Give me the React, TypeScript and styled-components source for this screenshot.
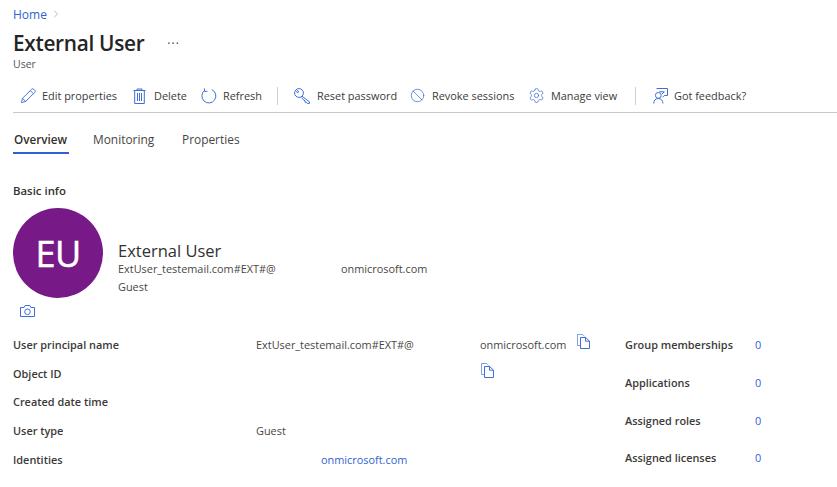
import React from 'react'

import { Ban, ChevronRight, Settings } from 'lucide-react'
import styled, { createGlobalStyle } from 'styled-components'

const blue = '#2f62cf'
const iconBlue = '#3f6fd8'
const text = '#323130'

const GlobalStyle = createGlobalStyle`
  html, body {
    margin: 0;
    padding: 0;
    background: #ffffff;
  }
  body {
    font-family: "Open Sans", "Noto Sans", sans-serif;
    color: ${text};
    overflow: hidden;
  }
`

const Page = styled.div`
  width: 837px;
  height: 487px;
  padding: 6px 0 0 13px;
  box-sizing: border-box;
  overflow: hidden;
`

const Breadcrumb = styled.nav`
  display: flex;
  align-items: center;
  gap: 3px;
  height: 16px;
  font-size: 12px;
  color: ${blue};
`

const TitleRow = styled.div`
  display: flex;
  align-items: center;
  height: 30px;
  margin-top: 6px;
`

const Title = styled.h1`
  margin: 0;
  font-size: 20.8px;
  line-height: 30px;
  font-weight: 600;
  color: #242424;
  letter-spacing: -0.3px;
`

const More = styled.span`
  margin: 2px 0 0 23px;
  font-size: 12px;
  line-height: 12px;
  letter-spacing: 1px;
  color: #444;
`

const Subtitle = styled.div`
  font-size: 10.5px;
  line-height: 14px;
  margin-top: -1px;
  color: #555;
`

const Toolbar = styled.div`
  display: flex;
  align-items: center;
  height: 33px;
  margin-top: 8px;
  padding-left: 7px;
  border-bottom: 1px solid #c8c8c8;
`

const ToolButton = styled.div<{ $gap?: number; $width: number }>`
  display: flex;
  align-items: center;
  width: ${(p) => p.$width}px;
  flex: none;
  font-size: 10.9px;
  color: #3b3a39;
  white-space: nowrap;

  svg {
    flex: none;
    margin-right: ${(p) => p.$gap ?? 7}px;
  }
`

const Divider = styled.span<{ $after: number }>`
  width: 1px;
  height: 18px;
  flex: none;
  background: #d0d0d0;
  margin-right: ${(p) => p.$after}px;
`

const Tabs = styled.div`
  display: flex;
  height: 41px;
`

const Tab = styled.div<{ $active?: boolean; $width: number }>`
  width: ${(p) => p.$width}px;
  height: 100%;
  box-sizing: border-box;
  padding: 17px 0 0 ${(p) => (p.$active ? 1 : 0)}px;
  margin-right: ${(p) => (p.$active ? 24 : 0)}px;
  font-size: ${(p) => (p.$active ? 11.7 : 11.9)}px;
  line-height: 18px;
  font-weight: ${(p) => (p.$active ? 600 : 400)};
  color: ${(p) => (p.$active ? '#323130' : '#484644')};
  border-bottom: ${(p) => (p.$active ? `2px solid ${blue}` : 'none')};
`

const SectionTitle = styled.h2`
  margin: 29px 0 0;
  font-size: 11.4px;
  line-height: 16px;
  font-weight: 600;
  color: ${text};
`

const Profile = styled.div`
  display: flex;
  align-items: center;
  margin-top: 9px;
`

const Avatar = styled.div`
  width: 90px;
  height: 90px;
  flex: none;
  border-radius: 50%;
  background: #771a87;
  color: #ffffff;
  font-size: 36px;
  -webkit-text-stroke: 0.5px #ffffff;
  display: flex;
  align-items: center;
  justify-content: center;
  letter-spacing: -0.5px;
`

const ProfileText = styled.div`
  margin: 32px 0 0 15px;
`

const ProfileName = styled.div`
  font-size: 16.5px;
  line-height: 18px;
  color: ${text};
`

const ProfileLine = styled.div`
  display: flex;
  font-size: 10.9px;
  line-height: 18px;
  color: #484644;
`

const EmailPart = styled.span<{ $width?: number }>`
  width: ${(p) => (p.$width ? `${p.$width}px` : 'auto')};
  flex: none;
  white-space: nowrap;
`

const CameraButton = styled.div`
  display: flex;
  height: 14px;
  margin: 7px 0 0 7px;
`

const Details = styled.div`
  display: flex;
  margin-top: 11px;
`

const InfoList = styled.div`
  width: 612px;
  flex: none;
`

const InfoRow = styled.div`
  display: grid;
  grid-template-columns: 243px 1fr;
  align-items: center;
  height: 28.8px;
  font-size: 10.9px;
`

const InfoLabel = styled.div`
  font-weight: 600;
  color: #3b3a39;
`

const InfoValue = styled.div<{ $indent?: number }>`
  display: flex;
  align-items: center;
  padding-left: ${(p) => p.$indent ?? 0}px;
  color: #484644;
  white-space: nowrap;
`

const IdentityLink = styled.a`
  color: ${blue};
  text-decoration: none;
`

const CopyWrap = styled.span<{ $left: number }>`
  display: inline-flex;
  margin-left: ${(p) => p.$left}px;
  margin-top: -5px;
`

const CountList = styled.div`
  flex: 1;
  margin-top: -4px;
`

const CountRow = styled.div`
  display: grid;
  grid-template-columns: 130px 1fr;
  align-items: center;
  height: 37.7px;
  font-size: 10.9px;
`

const CountLink = styled.a`
  color: ${blue};
  text-decoration: none;
`

const PencilIcon = () => (
  <svg width="16" height="16" viewBox="0 0 17 17" fill="none" stroke={iconBlue} strokeWidth="1">
    <path d="M1.5 15.5l1.2-4.6L12.4 1.3a1.5 1.5 0 0 1 2.2 0l1.1 1.1a1.5 1.5 0 0 1 0 2.2L6 14.3z" />
    <path d="M2.7 10.9l3.3 3.4M11 2.8l3.2 3.2" />
  </svg>
)

const TrashIcon = () => (
  <svg width="13" height="16" viewBox="0 0 13 16" fill="none" stroke={iconBlue} strokeWidth="1">
    <path d="M0.5 2.5h12M4 2.5V1h5v1.5M1.7 2.5v13h9.6v-13" />
    <path d="M4.5 5v8M6.5 5v8M8.5 5v8" />
  </svg>
)

const RefreshIcon = () => (
  <svg width="16" height="16" viewBox="0 0 16 16" fill="none" stroke={iconBlue} strokeWidth="1">
    <path d="M10.8 1.6A7 7 0 1 1 3.6 2.4" />
    <path d="M3.4 0.4v3h3" />
  </svg>
)

const KeyIcon = () => (
  <svg width="16" height="16" viewBox="0 0 16 16" fill="none" stroke={iconBlue} strokeWidth="1">
    <circle cx="5" cy="5" r="4.4" />
    <circle cx="3.6" cy="3.6" r="0.9" />
    <path d="M8 8.2l7.4 5.6v1.6h-2.2l-1-1.2h-1.2v-1.4L9.2 11.6 7.6 9.6" />
  </svg>
)

const FeedbackIcon = () => (
  <svg width="15" height="16" viewBox="0 0 15 16" fill="none" stroke={iconBlue} strokeWidth="1">
    <path d="M3.5 0.5h11v7h-3.2l-1.8 1.8" />
    <path d="M6.3 3.8h5l-2.5 2.4" />
    <circle cx="5.3" cy="7.4" r="2.9" />
    <path d="M0.7 15.5c0-3 1.8-5 4.6-5s4.6 2 4.6 5" />
  </svg>
)

const CopyIcon = () => (
  <svg width="13" height="15" viewBox="0 0 13 15" fill="none" stroke={iconBlue}>
    <path d="M3.5 11.5H0.5V0.5h5.2l2 2" strokeOpacity="0.65" />
    <path d="M3.5 3.5h5.2l3.8 3.6v7.4h-9z" />
    <path d="M8.5 3.5v3.7h4" />
  </svg>
)

const CameraIcon = () => (
  <svg width="15" height="12" viewBox="0 0 15 12" fill="none" stroke={iconBlue} strokeWidth="1">
    <path d="M0.5 2.5h3.6l1-2h4.8l1 2h3.6v9H0.5z" />
    <circle cx="7.5" cy="6.8" r="2.8" />
  </svg>
)

const infoRows = ['User principal name', 'Object ID', 'Created date time', 'User type', 'Identities']
const countRows = ['Group memberships', 'Applications', 'Assigned roles', 'Assigned licenses']

const App = (): React.ReactElement => {
  return (
    <Page>
      <GlobalStyle />
      <Breadcrumb>
        Home <ChevronRight size={12} color="#777" strokeWidth={1} />
      </Breadcrumb>
      <TitleRow>
        <Title>External User</Title>
        <More>···</More>
      </TitleRow>
      <Subtitle>User</Subtitle>

      <Toolbar>
        <ToolButton $width={113} $gap={6}><PencilIcon />Edit properties</ToolButton>
        <ToolButton $width={68} $gap={8}><TrashIcon />Delete</ToolButton>
        <ToolButton $width={76} $gap={6}><RefreshIcon />Refresh</ToolButton>
        <Divider $after={16} />
        <ToolButton $width={116} $gap={7}><KeyIcon />Reset password</ToolButton>
        <ToolButton $width={118} $gap={7}><Ban size={15} color={iconBlue} strokeWidth={1.2} />Revoke sessions</ToolButton>
        <ToolButton $width={107} $gap={6}><Settings size={17} color={iconBlue} strokeWidth={1.1} />Manage view</ToolButton>
        <Divider $after={17} />
        <ToolButton $width={110} $gap={6}><FeedbackIcon />Got feedback?</ToolButton>
      </Toolbar>

      <Tabs>
        <Tab $active $width={56}>Overview</Tab>
        <Tab $width={89}>Monitoring</Tab>
        <Tab $width={70}>Properties</Tab>
      </Tabs>

      <SectionTitle>Basic info</SectionTitle>
      <Profile>
        <Avatar>EU</Avatar>
        <ProfileText>
          <ProfileName>External User</ProfileName>
          <ProfileLine>
            <EmailPart $width={223}>ExtUser_testemail.com#EXT#@</EmailPart>
            <EmailPart>onmicrosoft.com</EmailPart>
          </ProfileLine>
          <ProfileLine>Guest</ProfileLine>
        </ProfileText>
      </Profile>
      <CameraButton>
        <CameraIcon />
      </CameraButton>

      <Details>
        <InfoList>
          {infoRows.map((label) => (
            <InfoRow key={label}>
              <InfoLabel>{label}</InfoLabel>
              {label === 'User principal name' && (
                <InfoValue>
                  <EmailPart $width={224}>ExtUser_testemail.com#EXT#@</EmailPart>
                  <EmailPart>onmicrosoft.com</EmailPart>
                  <CopyWrap $left={11}><CopyIcon /></CopyWrap>
                </InfoValue>
              )}
              {label === 'Object ID' && (
                <InfoValue>
                  <CopyWrap $left={225}><CopyIcon /></CopyWrap>
                </InfoValue>
              )}
              {label === 'Created date time' && <InfoValue />}
              {label === 'User type' && <InfoValue>Guest</InfoValue>}
              {label === 'Identities' && (
                <InfoValue $indent={65}>
                  <IdentityLink>onmicrosoft.com</IdentityLink>
                </InfoValue>
              )}
            </InfoRow>
          ))}
        </InfoList>
        <CountList>
          {countRows.map((label) => (
            <CountRow key={label}>
              <InfoLabel>{label}</InfoLabel>
              <CountLink>0</CountLink>
            </CountRow>
          ))}
        </CountList>
      </Details>
    </Page>
  )
}

export default App
